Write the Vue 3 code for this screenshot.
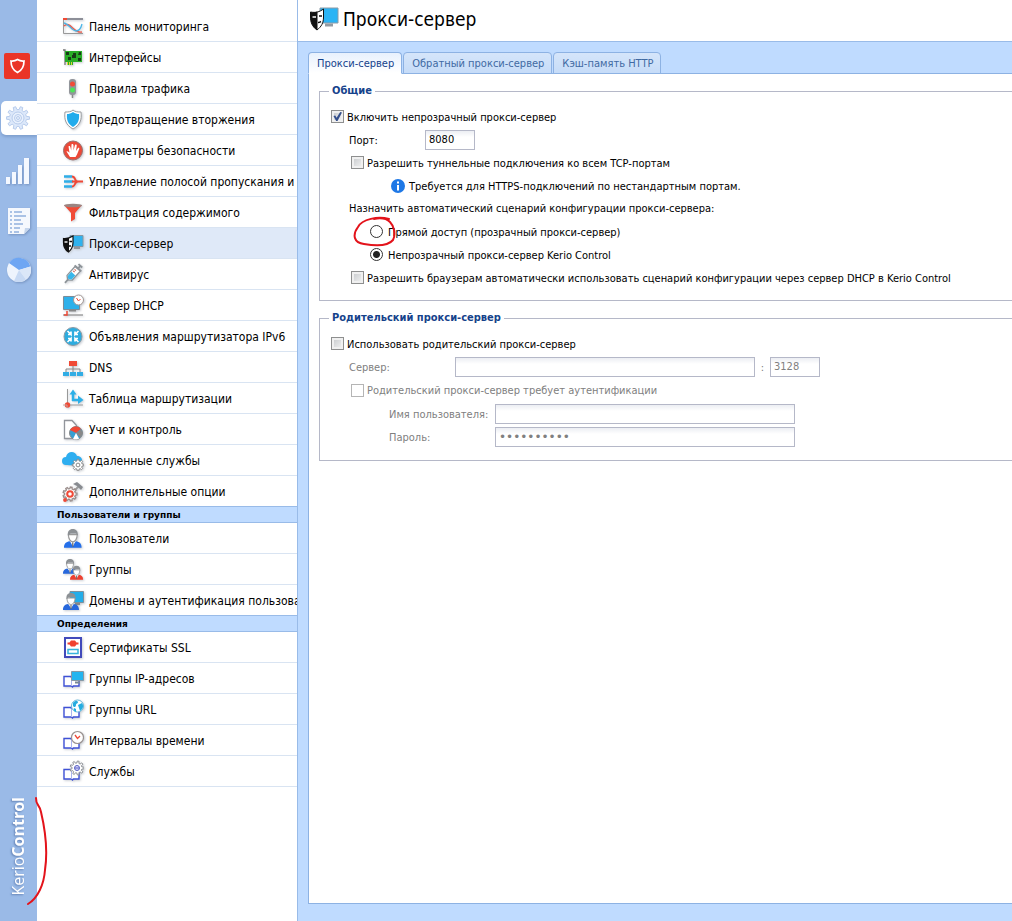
<script setup>
import { ref } from 'vue';

/**
 * Kerio Control — страница настройки прокси-сервера
 *
 * Слева: панель разделов и дерево настроек, справа: форма с вкладками.
 */

// =========================================================================
// Иконки (viewBox 22x22)
// =========================================================================

// Контур шестерёнки: n зубцов, внешний и внутренний радиус
const gear = (cx, cy, n, outer, inner) => {
  const step = (Math.PI * 2) / n;
  const point = (r, a) => `${(cx + r * Math.cos(a)).toFixed(2)} ${(cy + r * Math.sin(a)).toFixed(2)}`;
  let d = '';
  for (let i = 0; i < n; i++) {
    const a = i * step;
    d += `${i ? 'L' : 'M'}${point(inner, a - step * 0.3)}L${point(outer, a - step * 0.18)}`;
    d += `L${point(outer, a + step * 0.18)}L${point(inner, a + step * 0.3)}`;
  }
  return `${d}Z`;
};

const book = '<path d="M2 9.500h6.500l1 1 2-1H17V19H11.500l-1 1-1-1H2z" fill="#fff" stroke="#3f51d6" stroke-width="1.400"/><path d="M9.500 10.500V19" stroke="#aab4ee"/>';
const mask = '<path d="M1.500 6.500q5 .5 9.500-2.500v6.500c0 4.500-2 7.500-4.500 9.500C3 18 1.500 14.500 1.500 10.500z" fill="#fff" stroke="#111" stroke-width="1.200"/><path d="M1.500 6.500q3 .3 5.500-.8V19.500l-.5.5C3 18 1.500 14.500 1.500 10.500z" fill="#111"/><path d="M2.500 10h3" stroke="#fff" stroke-width="1.400"/><path d="M7.500 9.500H10M7 14h2" stroke="#111" stroke-width="1.300"/>';
const person = (x, y, size, coat) => `<g transform="translate(${x} ${y}) scale(${size})"><path d="M0 18c0-4 2-5.500 5-6l3 3 3-3c3 .5 5 2 5 6z" fill="${coat}"/><path d="M5.500 11.500 8 17l2.500-5.500z" fill="#fff"/><path d="M8 13v4" stroke="#555"/><path d="M4 6C4 10 6 12.500 8 12.500S12 10 12 6z" fill="#fff" stroke="#999"/><path d="M3.500 7C3 3 5 1 8 1s5 2 4.500 6L11 5H6z" fill="#8c9094"/></g>`;

const icons = {
  dashboard: '<path d="M1 4h20" stroke="#8d8f98" stroke-width="2"/><path d="M1 4h4" stroke="#f04a35" stroke-width="2"/><path d="M1.500 5v13.500H21" fill="none" stroke="#999"/><path d="M2 11C8 5 12 19 20 17" fill="none" stroke="#ef5948" stroke-width="1.400"/><path d="M2 8c5 1 8 8 12 8 3 0 5-3 6-7" fill="none" stroke="#49b5e8" stroke-width="1.300"/>',
  interfaces: '<path d="M1 4h2v15" fill="none" stroke="#777" stroke-width="1.300"/><path d="M3 5h17v11h-9v3H5v-3H3z" fill="#28ad26"/><path d="M4 6h3v3H4zm7 1h3v5h-4V9h1zm6-1h2v3h-3zm-1 6h3v3h-3zM6 11h3v3H6z" fill="#173c17"/><path d="M5 17.500h6" stroke="#e0d337" stroke-width="3" stroke-dasharray="1 1"/>',
  traffic: '<rect x="7" y="2" width="7" height="16" rx="3" fill="#92959a"/><path d="M10.500 18v3" stroke="#888" stroke-width="1.500"/><circle cx="10.500" cy="7" r="2.500" fill="#f24c37"/><circle cx="10.500" cy="13" r="2.500" fill="#4de359"/>',
  shield: '<path d="M11 2c2 2 5 2 8 2 1 8-1 13-8 17C4 17 2 12 3 4c3 0 6 0 8-2z" fill="#fff" stroke="#9a9da0"/><path d="M11 4c2 1.500 4 2 6 2 .6 6-1 10-6 13-5-3-6.600-7-6-13 2 0 4-.5 6-2z" fill="#22acec"/>',
  hand: '<circle cx="11" cy="11.500" r="9.500" fill="#ec4938" stroke="#9b716e"/><path d="M8 18 4.500 12.500c1-1 2 .3 3 1.300L6.500 7.500c1-1 1.800 0 2 1l.7 3L9.500 5.500c1-1 2 0 2 1v5L13 6c1-1 2 0 1.700 1L14 12l2-3c1-.5 1.500.3 1.200 1L15 15.500 13.500 18z" fill="#fff"/>',
  bandwidth: '<path d="M2 6.500h8M2 11.500h9M2 16.500h8" stroke="#30aee8" stroke-width="2.500"/><path d="M10 6.500c4 0 2 5 6 5-4 0-2 5-6 5M10 11.500h11" fill="none" stroke="#ef4937" stroke-width="2"/>',
  filter: '<path d="M2 4h18l-7 8v6l-4 2.500V12z" fill="#f04b36"/><ellipse cx="11" cy="4.500" rx="9" ry="1.800" fill="#9b8582"/>',
  proxy: `<path d="M8 3.500h13v11H8z" fill="#30b2ee" stroke="#8798a4"/><path d="M12 15h6v2h-6z" fill="#8f969d"/>${mask}`,
  antivirus: '<g transform="rotate(42 11 11)"><path d="M7.500 4h7v12l-3.500 3-3.500-3z" fill="#fff" stroke="#8e9499" stroke-width="1.300"/><path d="M8.300 10.500h5.400V16L11 18l-2.700-2z" fill="#39b7eb"/><path d="M6.500 3.500h9M8.500 0h5M11 0v3M11 18v5" stroke="#8e9499" stroke-width="1.800"/><path d="M9 6.500h2M9 8.500h2" stroke="#d6604e"/></g>',
  dhcp: '<path d="M1.500 2.500h16v13h-16z" fill="#2eb0ea" stroke="#7c8c98"/><path d="M7 16.500h7" stroke="#888" stroke-width="2"/><path d="M1 21h20" stroke="#777"/><path d="M5 17v4H2" fill="none" stroke="#ef4b37" stroke-width="1.500"/><circle cx="16.500" cy="6" r="5" fill="#fff" stroke="#a39794"/><path d="m14.500 4 2 3 2-2" fill="none" stroke="#ef4b37"/>',
  ipv6: '<circle cx="11" cy="11.500" r="9" fill="#2dacdf" stroke="#8b9ba5"/><path d="m5.500 6 3.500 3.500V6.500m0 3H6M16.500 6 13 9.500V6.500m0 3h3M5.500 17l3.500-3.500v3m0-3H6M16.500 17 13 13.500v3m0-3h3" fill="none" stroke="#fff" stroke-width="1.700"/>',
  dns: '<path d="M7 5h8v5H7z" fill="#f04a35"/><path d="M11 10v7M4 17v-4h14v4" fill="none" stroke="#888"/><path d="M1 16h6v4H1zm7 0h6v4H8zm7 0h6v4h-6z" fill="#31ade5"/>',
  routes: '<path d="M5.500 2v16H21" fill="none" stroke="#999"/><circle cx="5.500" cy="18" r="2.700" fill="#f04a35"/><path d="M1 18h4v3" fill="none" stroke="#c7a09b"/><path d="M11 14V6m-1 7h7" fill="none" stroke="#2cb0e8" stroke-width="2.500"/><path d="m7.500 7.500 3.500-5 3.500 5zM16 8.500l5.500 4.500-5.500 4z" fill="#2cb0e8"/>',
  accounting: '<path d="M2.500 2.500H10l4.500 5V20.500h-12z" fill="#fff" stroke="#92959b" stroke-width="1.300"/><circle cx="14" cy="15" r="6.500" fill="#369fd3" stroke="#888"/><path d="M14 15 8 12c2-4 8-5 11-1z" fill="#ef4936"/><path d="m14 15 5-3.500c2 3 1.500 6-1 8z" fill="#888"/><path d="m14 15-3 6c2 1 5 .7 6-.5z" fill="#fff"/>',
  cloud: `<path d="M4 16a4 4 0 0 1 0-8C5 2 13 1 15 7c4 0 7 4 4 8-2 2-12 1-15 1z" fill="#2eaef0"/><path d="${gear(16, 16, 8, 5.8, 4.3)}" fill="#fff" stroke="#888"/><circle cx="16" cy="16" r="1.900" fill="#fff" stroke="#888"/>`,
  advanced: `<path d="M9 14 17 6" stroke="#999" stroke-width="1.800"/><path d="${gear(8, 14, 9, 7, 5.4)}" fill="#fff" stroke="#9a8d8b" stroke-width="1.300"/><circle cx="8" cy="14" r="2.800" fill="#fff" stroke="#ef4937" stroke-width="2"/><path d="m11 4 4-2 6 5-2 3-4-4z" fill="#888b90"/><circle cx="3" cy="20" r="1.900" fill="#ef4937"/>`,
  user: person(2, 1, 1.1, '#246fea'),
  groups: `${person(1, 0, 0.88, '#2868dc')}${person(8, 7, 0.82, '#ee402f')}`,
  domains: `<path d="M8 2.500h13.500v11H8z" fill="#23ade9" stroke="#7d919e"/><path d="M13 14h5v2h-5z" fill="#888"/>${person(1, 3, 1, '#2868dc')}`,
  certificate: '<path d="M3 2h16v19H3z" fill="#fff" stroke="#414abb" stroke-width="2"/><path d="M5.500 6.500h2l1.500-2h4l1.500 2h2v2h-2L13 10.500H9L7.500 8.500h-2z" fill="#ef4130"/><path d="M6 13.500h10v4H6z" fill="#fff" stroke="#37b3dc" stroke-width="1.500"/>',
  ip: `${book}<path d="M9.500 4.500h12v9h-12z" fill="#24b5ef" stroke="#8798a4"/><path d="M13 14.500h5v2h-5z" fill="#788692"/>`,
  url: `${book}<circle cx="15.500" cy="8" r="6" fill="#fff" stroke="#65b6d9"/><path d="M11 5c2-3 5-2 5-1 0 2-2 1-2 3s-2 3-3 1zm5 2 4-2c2 3 1 6-2 8l-1-3zm-4 3 2 1v3c-2-1-3-2-2-4z" fill="#25ace0"/>`,
  time: `${book}<circle cx="15.500" cy="8.500" r="6" fill="#fff" stroke="#99918f" stroke-width="1.200"/><path d="m13 6 2.500 3.500L18 7" fill="none" stroke="#ef4936" stroke-width="1.300"/>`,
  services: `${book}<path d="${gear(15, 8, 9, 7, 5)}" fill="#fff" stroke="#8f9297"/><circle cx="15" cy="8" r="2.500" fill="#ddd9ff" stroke="#555fc2"/><path d="M13 8h4" stroke="#555fc2"/>`,
};

const railGear = gear(12, 12, 10, 11.5, 8.5);

// =========================================================================
// Навигация
// =========================================================================

const sections = [
  {
    title: '',
    items: [
      { icon: 'dashboard', label: 'Панель мониторинга' },
      { icon: 'interfaces', label: 'Интерфейсы' },
      { icon: 'traffic', label: 'Правила трафика' },
      { icon: 'shield', label: 'Предотвращение вторжения' },
      { icon: 'hand', label: 'Параметры безопасности' },
      { icon: 'bandwidth', label: 'Управление полосой пропускания и' },
      { icon: 'filter', label: 'Фильтрация содержимого' },
      { icon: 'proxy', label: 'Прокси-сервер' },
      { icon: 'antivirus', label: 'Антивирус' },
      { icon: 'dhcp', label: 'Сервер DHCP' },
      { icon: 'ipv6', label: 'Объявления маршрутизатора IPv6' },
      { icon: 'dns', label: 'DNS' },
      { icon: 'routes', label: 'Таблица маршрутизации' },
      { icon: 'accounting', label: 'Учет и контроль' },
      { icon: 'cloud', label: 'Удаленные службы' },
      { icon: 'advanced', label: 'Дополнительные опции' },
    ],
  },
  {
    title: 'Пользователи и группы',
    items: [
      { icon: 'user', label: 'Пользователи' },
      { icon: 'groups', label: 'Группы' },
      { icon: 'domains', label: 'Домены и аутентификация пользова' },
    ],
  },
  {
    title: 'Определения',
    items: [
      { icon: 'certificate', label: 'Сертификаты SSL' },
      { icon: 'ip', label: 'Группы IP-адресов' },
      { icon: 'url', label: 'Группы URL' },
      { icon: 'time', label: 'Интервалы времени' },
      { icon: 'services', label: 'Службы' },
    ],
  },
];

const activeItem = ref('proxy');

const tabs = ['Прокси-сервер', 'Обратный прокси-сервер', 'Кэш-память HTTP'];
const activeTab = ref(0);

// =========================================================================
// Форма
// =========================================================================

const enabled       = ref(true);
const port          = ref('8080');
const allowTunnel   = ref(false);
const script        = ref('proxy');
const allowDhcp     = ref(false);
const useParent     = ref(false);
const parentServer  = ref('');
const parentPort    = ref('3128');
const parentAuth    = ref(false);
const parentUser    = ref('');
const parentPass    = ref('**********');
</script>

<template>
  <div class="app">
    <!-- Панель разделов -->
    <aside class="rail">
      <button type="button" class="rail-btn rail-btn--logo" aria-label="Kerio Control">
        <svg width="26" height="26" viewBox="0 0 26 26">
          <rect width="26" height="26" rx="2" fill="#ea3527" />
          <path d="M13.500 6.500c2 1.300 4 1.700 6.500 1.500 0 5-1.500 9-6.500 11.500C8.500 17 7 13 7 8c2.500.2 4.500-.2 6.500-1.500z" fill="none" stroke="#fff" stroke-width="1.700" />
        </svg>
      </button>
      <button type="button" class="rail-btn rail-btn--active" aria-label="Конфигурация">
        <svg width="24" height="24" viewBox="0 0 24 24" fill="none" stroke="#b8ccec">
          <path :d="railGear" fill="#dce8fa" />
          <circle cx="12" cy="12" r="6" fill="#e9f1fd" />
          <circle cx="12" cy="12" r="3.500" />
          <circle cx="12" cy="12" r="1.500" />
        </svg>
      </button>
      <button type="button" class="rail-btn rail-btn--tool" aria-label="Состояние">
        <svg width="26" height="28" viewBox="0 0 26 28" fill="#f4f8ff">
          <path d="M0 20h4v7H0zM6 15h4v12H6zM12 8h4v19h-4zM18 1h5v26h-5z" />
        </svg>
      </button>
      <button type="button" class="rail-btn rail-btn--tool" aria-label="Журналы">
        <svg width="24" height="28" viewBox="0 0 24 28">
          <path d="M1 1h22v20l-6 6H1z" fill="#f5f8fd" />
          <path d="M23 21h-5l-1 6z" fill="#c5d5ec" />
          <path d="M3 5h2m2 0h8M3 9h2m2 0h12M3 13h2m2 0h7M3 17h2m2 0h9M3 21h2m2 0h6M3 25h2m2 0h5" stroke="#aac2e5" stroke-width="2" />
        </svg>
      </button>
      <button type="button" class="rail-btn rail-btn--tool" aria-label="Статистика">
        <svg width="26" height="26" viewBox="0 0 26 26">
          <circle cx="13" cy="13" r="12" fill="#eef4fd" />
          <path d="M13 13 3 6A12 12 0 0 1 24.500 9.500z" fill="#6ea6f3" />
          <path d="m13 13 11.500-3.500A12 12 0 0 1 20 22.500z" fill="#dbe7f8" />
          <path d="m13 13 7 9.500A12 12 0 0 1 8 24z" fill="#c8daf4" />
        </svg>
      </button>
      <div class="brand">Kerio<b>Control</b></div>
      <svg class="rail-stroke" width="22" height="112" viewBox="0 0 22 112" aria-hidden="true">
        <path d="M9 2c0 8 3 5 5 14 4 17 7 38 4 58-1 14-7 28-17 34" fill="none" stroke="#e3131b" stroke-width="2" stroke-linecap="round" />
      </svg>
    </aside>

    <!-- Дерево настроек -->
    <nav class="nav">
      <section v-for="section in sections" :key="section.title" class="nav-section">
        <h2 v-if="section.title" class="nav-title">{{ section.title }}</h2>
        <a
          v-for="item in section.items"
          :key="item.icon"
          href="#"
          class="nav-item"
          :class="{ 'is-active': item.icon === activeItem }"
          @click.prevent="activeItem = item.icon"
        >
          <svg class="nav-icon" width="22" height="22" viewBox="0 0 22 22" v-html="icons[item.icon]"></svg>
          <span class="nav-label">{{ item.label }}</span>
        </a>
      </section>
    </nav>

    <main class="main">
      <header class="title-bar">
        <svg width="30" height="26" viewBox="0 0 30 26">
          <path d="M11 2h18v15H11z" fill="#2bb4f5" stroke="#8c9aa6" />
          <path d="M16 17.500h8v3h-8z" fill="#949ba2" />
          <path d="M1.500 6c5 1 9 0 13-3v8c0 6-2 9.500-6.500 13C3 20.500 1.500 16 1.500 11z" fill="#fff" stroke="#111" />
          <path d="M1.500 6c3 .5 5 .2 7-.5V23.500L8 24C3 20.500 1.500 16 1.500 11z" fill="#111" />
          <path d="M3.500 11h3.500" stroke="#fff" stroke-width="1.500" />
          <path d="M10 10h3M9 16.500c1.500 0 2-.5 3-1" fill="none" stroke="#111" stroke-width="1.500" />
        </svg>
        <h1>Прокси-сервер</h1>
      </header>

      <div class="workspace">
        <div class="tabs" role="tablist">
          <button
            v-for="(tab, index) in tabs"
            :key="tab"
            type="button"
            role="tab"
            class="tab"
            :class="{ 'is-active': index === activeTab }"
            :aria-selected="index === activeTab"
            @click="activeTab = index"
          >{{ tab }}</button>
        </div>

        <form class="panel" @submit.prevent>
          <fieldset class="group">
            <legend>Общие</legend>
            <div class="row">
              <input id="enabled" v-model="enabled" type="checkbox" class="check" />
              <label for="enabled">Включить непрозрачный прокси-сервер</label>
            </div>
            <div class="row row--field">
              <label for="port" class="caption--port">Порт:</label>
              <input id="port" v-model="port" type="text" class="text text--short" />
            </div>
            <div class="row row--sub">
              <input id="tunnel" v-model="allowTunnel" type="checkbox" class="check" />
              <label for="tunnel">Разрешить туннельные подключения ко всем TCP-портам</label>
            </div>
            <div class="row row--note">
              <svg width="14" height="14" viewBox="0 0 14 14">
                <circle cx="7" cy="7" r="7" fill="#1e78e6" />
                <path d="M7 2.500v2M7 6v5.500" stroke="#fff" stroke-width="2" />
              </svg>
              <span>Требуется для HTTPS-подключений по нестандартным портам.</span>
            </div>
            <div class="row row--field">Назначить автоматический сценарий конфигурации прокси-сервера:</div>
            <div class="row row--radio">
              <input id="direct" v-model="script" type="radio" name="script" value="direct" class="radio" />
              <label for="direct">Прямой доступ (прозрачный прокси-сервер)</label>
              <svg class="radio-stroke" width="44" height="34" viewBox="0 0 44 34" aria-hidden="true">
                <path d="M36 4C25 1 9 4 5 12-1 20 1 28 11 29c11 2 24 2 29-4 3-6 1-14-3-18-4-4-11-4-16-3" fill="none" stroke="#e3131b" stroke-width="2" stroke-linecap="round" />
              </svg>
            </div>
            <div class="row row--radio">
              <input id="opaque" v-model="script" type="radio" name="script" value="proxy" class="radio" />
              <label for="opaque">Непрозрачный прокси-сервер Kerio Control</label>
            </div>
            <div class="row row--sub">
              <input id="dhcp" v-model="allowDhcp" type="checkbox" class="check" />
              <label for="dhcp">Разрешить браузерам автоматически использовать сценарий конфигурации через сервер DHCP в Kerio Control</label>
            </div>
          </fieldset>

          <fieldset class="group">
            <legend>Родительский прокси-сервер</legend>
            <div class="row">
              <input id="parent" v-model="useParent" type="checkbox" class="check" />
              <label for="parent">Использовать родительский прокси-сервер</label>
            </div>
            <div class="row row--field" :class="{ 'is-disabled': !useParent }">
              <label for="server" class="caption--server">Сервер:</label>
              <input id="server" v-model="parentServer" type="text" class="text" :disabled="!useParent" />
              <label for="parent-port" class="colon">:</label>
              <input id="parent-port" v-model="parentPort" type="text" class="text text--short" :disabled="!useParent" />
            </div>
            <div class="row row--sub row--tall" :class="{ 'is-disabled': !useParent }">
              <input id="auth" v-model="parentAuth" type="checkbox" class="check" :disabled="!useParent" />
              <label for="auth">Родительский прокси-сервер требует аутентификации</label>
            </div>
            <div class="row row--deep" :class="{ 'is-disabled': !useParent }">
              <label for="user" class="caption--server">Имя пользователя:</label>
              <input id="user" v-model="parentUser" type="text" class="text" :disabled="!useParent" />
            </div>
            <div class="row row--deep row--tall" :class="{ 'is-disabled': !useParent }">
              <label for="pass" class="caption--server">Пароль:</label>
              <input id="pass" v-model="parentPass" type="password" class="text text--password" :disabled="!useParent" />
            </div>
          </fieldset>
        </form>
      </div>
    </main>
  </div>
</template>

<style>
body {
  margin: 0;
  background: #fff;
}
</style>

<style scoped>
.app {
  display: flex;
  min-height: 100vh;
  font-family: "DejaVu Sans Condensed", "Noto Sans", sans-serif;
  font-size: 11px;
  color: #000;
  overflow: hidden;
}

.app * { box-sizing: border-box; }

/* Панель разделов */
.rail {
  position: relative;
  flex: none;
  width: 37px;
  padding: 53px 0 25px;
  display: flex;
  flex-direction: column;
  align-items: center;
  background: #9abae7;
}

.rail-btn {
  display: flex;
  padding: 0;
  border: none;
  background: none;
  cursor: pointer;
}

.rail-btn svg { display: block; }

.rail-btn--logo {
  align-self: flex-start;
  margin-left: 4px;
}

.rail-btn--active {
  align-self: flex-end;
  width: 36px;
  height: 34px;
  margin-top: 22px;
  align-items: center;
  padding-left: 5px;
  border-radius: 5px 0 0 5px;
  background: #fff;
  box-shadow: 0 2px 3px #7f9fce;
}

.rail-btn--tool { margin-top: 22px; }

.rail-btn--tool svg { filter: drop-shadow(1px 1px 1px #7895c2); }

.brand {
  margin-top: auto;
  padding-left: 2px;
  writing-mode: vertical-rl;
  transform: rotate(180deg);
  font-family: "Open Sans", "Noto Sans", sans-serif;
  font-size: 16px;
  line-height: 20px;
  color: #fff;
  text-shadow: -1px -1px 2px #6382b4;
}

.rail-stroke {
  position: absolute;
  left: 27px;
  bottom: 13px;
  z-index: 2;
}

/* Дерево настроек */
.nav {
  position: relative;
  z-index: 1;
  flex: none;
  width: 260px;
  padding-top: 11px;
  overflow: hidden;
  background: #fff;
}

.nav-title {
  height: 16px;
  margin: 0;
  padding-left: 20px;
  border-bottom: 1px solid #99bbe8;
  background: #bfdbff;
  font-family: "DejaVu Sans", sans-serif;
  font-size: 9px;
  line-height: 17px;
  font-weight: bold;
}

.nav-item {
  display: flex;
  align-items: center;
  gap: 5px;
  height: 31px;
  padding-left: 25px;
  border-bottom: 1px solid #d9e4f2;
  color: #000;
  font-size: 12px;
  text-decoration: none;
  white-space: nowrap;
}

.nav-label { padding-top: 2px; }

.nav-section:not(:last-child) .nav-item:last-child { border-bottom-color: #99bbe8; }

.nav-item.is-active { background: #dfe9f8; }

.nav-icon {
  flex: none;
  filter: drop-shadow(1px 1px 1px #c8ccd2);
}

/* Основная область */
.main {
  flex: 1;
  min-width: 0;
  display: flex;
  flex-direction: column;
  border-left: 1px solid #99bbe8;
  background: #bfdbff;
}

.title-bar {
  display: flex;
  align-items: center;
  gap: 4px;
  height: 42px;
  padding: 0 0 3px 11px;
  border-bottom: 1px solid #99bbe8;
  background: #fff;
}

.title-bar h1 {
  margin: 0;
  font-size: 19px;
  font-weight: normal;
}

.workspace {
  flex: 1;
  display: flex;
  flex-direction: column;
  padding: 10px 0 17px 10px;
}

.tabs {
  display: flex;
  align-items: flex-end;
  gap: 1px;
}

.tab {
  height: 22px;
  padding: 0 7px 0 8px;
  border: 1px solid #8db2e3;
  border-radius: 4px 4px 0 0;
  background: linear-gradient(#d5e5fa, #c6dcf8);
  color: #416aa3;
  font: inherit;
  white-space: nowrap;
  cursor: pointer;
}

.tab.is-active {
  z-index: 1;
  border-bottom-color: #fff;
  background: linear-gradient(#e8f1fd, #fff);
  color: #15428b;
}

.panel {
  flex: 1;
  margin-top: -1px;
  padding: 10px 0 0 10px;
  border: 1px solid #8db2e3;
  border-right: none;
  background: #fff;
}

.group {
  min-width: 0;
  margin: 0 0 10px;
  padding: 7px 0 11px 11px;
  border: 1px solid #b5b8c8;
  border-right: none;
}

.group legend {
  margin-left: -2px;
  padding: 0 3px;
  color: #15428b;
  font-weight: bold;
  line-height: 14px;
}

.row {
  position: relative;
  display: flex;
  align-items: center;
  gap: 3px;
  height: 23px;
  white-space: nowrap;
}

.row label,
.row span { padding-top: 1px; }

.row--field { padding-left: 18px; }
.row--sub   { padding-left: 20px; }
.row--note  { padding-left: 60px; gap: 4px; }
.row--radio { padding-left: 39px; gap: 5px; }
.row--deep  { padding-left: 58px; }
.row--tall  { height: 24px; }

.row.is-disabled { color: #808080; }

.caption--port   { width: 73px; }
.caption--server { width: 103px; }

.colon {
  width: 9px;
  text-align: center;
}

.text {
  width: 300px;
  height: 20px;
  padding: 0 3px;
  border: 1px solid #b5b8c8;
  background: linear-gradient(#eceef3, #fff 6px);
  color: #000;
  font: inherit;
}

.text--short    { width: 50px; }
.text:disabled  { color: #808080; }

.text--password {
  font-family: "DejaVu Sans", sans-serif;
  font-size: 12px;
}

.check {
  appearance: none;
  flex: none;
  width: 13px;
  height: 13px;
  margin: 0;
  border: 1px solid #8e8f8f;
  background: linear-gradient(135deg, #c4c7ca, #f5f5f5);
  box-shadow: inset 0 0 0 2px #f0f0f0;
}

.check:checked::before {
  content: "";
  display: block;
  width: 9px;
  height: 9px;
  margin: 1px;
  background: #344f8c;
  clip-path: polygon(5% 45%, 25% 40%, 40% 65%, 80% 0, 100% 5%, 50% 100%, 35% 100%);
}

.check:disabled {
  border-color: #b5b5b5;
  background: #fff;
  box-shadow: none;
}

.radio {
  appearance: none;
  flex: none;
  width: 13px;
  height: 13px;
  margin: 0;
  border: 1px solid #333;
  border-radius: 50%;
  background: #fff;
}

.radio:checked { background: radial-gradient(circle, #222 3px, #fff 4px); }

.radio-stroke {
  position: absolute;
  left: 22px;
  top: -5px;
}
</style>
